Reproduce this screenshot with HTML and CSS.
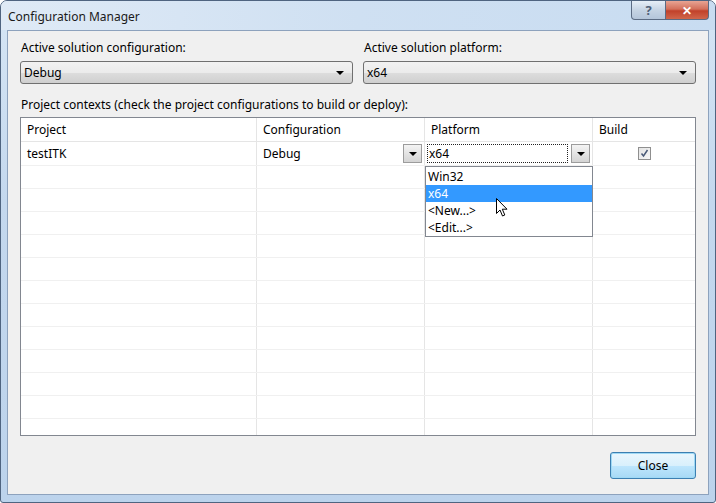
FILE: index.html
```html
<!DOCTYPE html>
<html lang="en">
<head>
  <meta charset="UTF-8" />
  <title>Configuration Manager</title>
  <link rel="stylesheet" href="styles.css">
</head>
<body>
  <div class="window">
    <div class="titlebar">
      <span class="title">Configuration Manager</span>
      <div class="caption-buttons">
        <div class="cap-btn help">?</div>
        <div class="cap-btn close">&#10005;</div>
      </div>
    </div>

    <div class="client">
      <div class="top-row">
        <div class="field">
          <div class="label">Active solution configuration:</div>
          <div class="combo"><span>Debug</span><span class="caret"></span></div>
        </div>
        <div class="field">
          <div class="label">Active solution platform:</div>
          <div class="combo"><span>x64</span><span class="caret"></span></div>
        </div>
      </div>

      <div class="label contexts">Project contexts (check the project configurations to build or deploy):</div>

      <div class="grid">
        <div class="row head">
          <div class="cell c1">Project</div>
          <div class="cell c2">Configuration</div>
          <div class="cell c3">Platform</div>
          <div class="cell c4">Build</div>
        </div>
        <div class="row tall">
          <div class="cell c1">testITK</div>
          <div class="cell c2 editable"><span>Debug</span><span class="drop-btn"><span class="caret"></span></span></div>
          <div class="cell c3 editable">
            <span class="edit-box">x64</span><span class="drop-btn"><span class="caret"></span></span>
            <div class="dropdown">
              <div class="item">Win32</div>
              <div class="item selected">x64</div>
              <div class="item">&lt;New...&gt;</div>
              <div class="item">&lt;Edit...&gt;</div>
            </div>
          </div>
          <div class="cell c4 center"><span class="check">
            <svg width="9" height="9" viewBox="0 0 9 9"><path d="M1.5 4.5 L3.5 7 L7.5 1" fill="none" stroke="#4a5a78" stroke-width="1.5"/></svg>
          </span></div>
        </div>
        <div class="row"><div class="cell c1"></div><div class="cell c2"></div><div class="cell c3"></div><div class="cell c4"></div></div>
        <div class="row"><div class="cell c1"></div><div class="cell c2"></div><div class="cell c3"></div><div class="cell c4"></div></div>
        <div class="row"><div class="cell c1"></div><div class="cell c2"></div><div class="cell c3"></div><div class="cell c4"></div></div>
        <div class="row"><div class="cell c1"></div><div class="cell c2"></div><div class="cell c3"></div><div class="cell c4"></div></div>
        <div class="row"><div class="cell c1"></div><div class="cell c2"></div><div class="cell c3"></div><div class="cell c4"></div></div>
        <div class="row"><div class="cell c1"></div><div class="cell c2"></div><div class="cell c3"></div><div class="cell c4"></div></div>
        <div class="row"><div class="cell c1"></div><div class="cell c2"></div><div class="cell c3"></div><div class="cell c4"></div></div>
        <div class="row"><div class="cell c1"></div><div class="cell c2"></div><div class="cell c3"></div><div class="cell c4"></div></div>
        <div class="row"><div class="cell c1"></div><div class="cell c2"></div><div class="cell c3"></div><div class="cell c4"></div></div>
        <div class="row"><div class="cell c1"></div><div class="cell c2"></div><div class="cell c3"></div><div class="cell c4"></div></div>
        <div class="row"><div class="cell c1"></div><div class="cell c2"></div><div class="cell c3"></div><div class="cell c4"></div></div>
        <div class="row"><div class="cell c1"></div><div class="cell c2"></div><div class="cell c3"></div><div class="cell c4"></div></div>

        <svg class="cursor" width="13" height="20" viewBox="0 0 13 20">
          <path d="M0.5 0.5 L0.5 15.5 L4 12 L6.5 18 L8.8 17 L6.3 11.2 L11 11.2 Z" fill="#fff" stroke="#000" stroke-width="1"/>
        </svg>
      </div>

      <div class="footer">
        <div class="button">Close</div>
      </div>
    </div>
  </div>
</body>
</html>
```

FILE: styles.css
```css
body {
  margin: 0;
  font-family: "Noto Sans", "Open Sans", Arial, sans-serif;
  font-size: 12px;
  color: #000;
  background: #fff;
}

.window {
  width: 716px;
  height: 503px;
  box-sizing: border-box;
  display: flex;
  flex-direction: column;
  background: linear-gradient(180deg, #d6e6f5 0%, #c4d8ee 40%, #bcd3ec 100%);
  border: 1px solid #4f6480;
  border-radius: 7px 7px 3px 3px;
  overflow: hidden;
}

.titlebar {
  height: 29px;
  display: flex;
  justify-content: space-between;
  align-items: flex-start;
  padding-left: 7px;
  background: linear-gradient(90deg, #dfeaf6 0%, #cfe0f2 50%, #c8dcf1 100%);
}

.title {
  margin-top: 7px;
  font-size: 12px;
  color: #1a1a1a;
}

.caption-buttons {
  display: flex;
  margin-right: 6px;
}

.cap-btn {
  height: 18px;
  display: flex;
  align-items: center;
  justify-content: center;
  color: #fff;
  font-weight: bold;
  border: 1px solid #5b6b83;
  border-top: none;
}

.cap-btn.help {
  width: 33px;
  background: linear-gradient(180deg, #e6eef7 0%, #c6d4e4 50%, #b4c5da 100%);
  color: #4f5f77;
  border-radius: 0 0 0 4px;
  font-size: 13px;
}

.cap-btn.close {
  width: 42px;
  background: linear-gradient(180deg, #e8a493 0%, #d3705b 45%, #c1412a 55%, #d0664b 100%);
  border-left: none;
  border-radius: 0 0 4px 0;
  font-size: 12px;
}

.client {
  flex: 1;
  margin: 0 6px 7px 6px;
  background: #f0f0f0;
  border: 1px solid #8da2bd;
  padding: 9px 12px 0 12px;
  display: flex;
  flex-direction: column;
}

.top-row {
  display: flex;
  gap: 10px;
}

.field {
  flex: 1;
}

.label {
  line-height: 16px;
  margin-bottom: 5px;
  padding-left: 1px;
}

.combo {
  height: 21px;
  border: 1px solid #707070;
  border-radius: 3px;
  background: linear-gradient(180deg, #f2f2f2 0%, #ebebeb 50%, #dddddd 51%, #cfcfcf 100%);
  display: flex;
  justify-content: space-between;
  align-items: center;
  padding: 0 8px 0 3px;
}

.caret {
  width: 0;
  height: 0;
  border-left: 4px solid transparent;
  border-right: 4px solid transparent;
  border-top: 4px solid #000;
}

.contexts {
  margin-top: 13px;
  margin-bottom: 4px;
}

.grid {
  position: relative;
  height: 317px;
  background: #fff;
  border: 1px solid #828790;
  overflow: hidden;
}

.row {
  display: flex;
  height: 22px;
  border-bottom: 1px solid #f0f0f0;
}

.row.head,
.row.tall {
  height: 23px;
}

.row.head {
  border-bottom: 1px solid #e5e5e5;
}

.cell {
  height: 100%;
  box-sizing: border-box;
  display: flex;
  align-items: center;
  padding-left: 6px;
  border-right: 1px solid #e5e5e5;
}

.c1 { width: 236px; }
.c2 { width: 168px; }
.c3 { width: 168px; }
.c4 { flex: 1; border-right: none; }

.cell.editable {
  justify-content: space-between;
  padding-right: 2px;
  position: relative;
}

.cell.c3.editable {
  padding-left: 2px;
}

.edit-box {
  flex: 1;
  height: 19px;
  box-sizing: border-box;
  border: 1px dotted #222;
  padding-left: 1px;
  display: flex;
  align-items: center;
  margin-right: 3px;
}

.drop-btn {
  width: 19px;
  height: 19px;
  box-sizing: border-box;
  border: 1px solid #9c9c9c;
  background: linear-gradient(180deg, #f4f4f4 0%, #e4e4e4 50%, #d4d4d4 100%);
  display: flex;
  align-items: center;
  justify-content: center;
}

.center {
  justify-content: center;
  padding-left: 0;
}

.check {
  width: 11px;
  height: 11px;
  border: 1px solid #8f8f8f;
  background: linear-gradient(135deg, #e4e4e4, #f6f6f6);
  display: flex;
  align-items: center;
  justify-content: center;
}

.dropdown {
  position: absolute;
  left: 0;
  top: 24px;
  width: 166px;
  background: #fff;
  border: 1px solid #828790;
  padding-top: 1px;
  z-index: 2;
}

.item {
  height: 17px;
  line-height: 17px;
  padding-left: 2px;
}

.item.selected {
  background: #3399ff;
  color: #fff;
}

.cursor {
  position: absolute;
  left: 475px;
  top: 80px;
  z-index: 3;
}

.footer {
  display: flex;
  justify-content: flex-end;
  padding-top: 16px;
}

.button {
  width: 86px;
  height: 27px;
  box-sizing: border-box;
  border: 1px solid #3c7fb1;
  border-radius: 3px;
  background: linear-gradient(180deg, #eaf6fd 0%, #d9f0fc 50%, #bee6fd 51%, #a7d9f5 100%);
  box-shadow: inset 0 0 0 1px #9fd9f5;
  display: flex;
  align-items: center;
  justify-content: center;
}
```
